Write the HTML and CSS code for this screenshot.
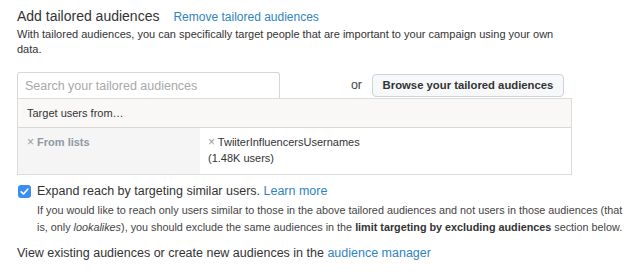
FILE: index.html
```html
<!DOCTYPE html>
<html>
<head>
<meta charset="utf-8">
<link rel="stylesheet" href="styles.css">
</head>
<body>
<div class="page">
  <div class="title-row">
    <h2 class="title">Add tailored audiences</h2>
    <a class="link remove" href="#">Remove tailored audiences</a>
  </div>
  <p class="desc">With tailored audiences, you can specifically target people that are important to your campaign using your own data.</p>

  <div class="search-row">
    <div class="search">Search your tailored audiences</div>
    <div class="browse-group">
      <span class="or">or</span>
      <button class="browse">Browse your tailored audiences</button>
    </div>
  </div>
  <div class="panel">
    <div class="panel-head">Target users from…</div>
    <div class="panel-body">
      <div class="col-left"><span class="x">×</span> <b>From lists</b></div>
      <div class="col-right"><span class="x">×</span> TwiiterInfluencersUsernames<br>(1.48K users)</div>
    </div>
  </div>

  <div class="expand">
    <span class="checkbox"><svg viewBox="0 0 13 13" width="13" height="13"><path d="M3.2 6.8 L5.5 9 L9.9 4" fill="none" stroke="#fff" stroke-width="1.6" stroke-linecap="round" stroke-linejoin="round"/></svg></span>
    <span class="expand-text">Expand reach by targeting similar users. <a class="link" href="#">Learn more</a></span>
  </div>
  <p class="note">If you would like to reach only users similar to those in the above tailored audiences and not users in those audiences (that is, only <i>lookalikes</i>), you should exclude the same audiences in the <b>limit targeting by excluding audiences</b> section below.</p>

  <p class="footer">View existing audiences or create new audiences in the <a class="link" href="#">audience manager</a></p>
</div>
</body>
</html>
```

FILE: styles.css
```css
html, body {
  margin: 0;
  padding: 0;
  background: #fff;
}
body {
  font-family: "Liberation Sans", Arial, sans-serif;
  color: #333;
}
.page {
  width: 610px;
  padding: 7px 0 0 17px;
}
.title-row {
  display: flex;
  align-items: baseline;
  gap: 14px;
}
.title {
  margin: 0;
  font-size: 14px;
  line-height: 18px;
  font-weight: normal;
  color: #333;
}
.link {
  color: #2f84bf;
  text-decoration: none;
}
.remove {
  font-size: 12px;
}
.desc {
  width: 555px;
  margin: 2px 0 0;
  font-size: 11px;
  line-height: 15px;
  color: #333;
}
.search-row {
  width: 555px;
  margin-top: 15px;
  display: flex;
  align-items: center;
  justify-content: space-between;
  height: 26px;
}
.search {
  box-sizing: border-box;
  width: 263px;
  height: 26px;
  border: 1px solid #d6d6d6;
  border-bottom: none;
  border-radius: 3px 3px 0 0;
  padding: 0 7px;
  font-size: 12.5px;
  line-height: 26px;
  color: #a8a8a8;
}
.browse-group {
  display: flex;
  align-items: center;
  padding-right: 8px;
}
.or {
  font-size: 12.5px;
  color: #444;
  margin-right: 10px;
}
.browse {
  box-sizing: border-box;
  height: 23px;
  width: 192px;
  border: 1px solid #ccd3d9;
  border-radius: 4px;
  background: #f6f8fa;
  font-family: "Liberation Sans", Arial, sans-serif;
  font-weight: bold;
  font-size: 11.3px;
  color: #333;
  padding: 0;
}
.panel {
  box-sizing: border-box;
  width: 555px;
  border: 1px solid #dcdcdc;
}
.panel-head {
  height: 29px;
  box-sizing: border-box;
  border-bottom: 1px solid #d8d8d8;
  background: #faf8f7;
  padding-left: 9px;
  font-size: 11px;
  line-height: 28px;
  color: #333;
}
.panel-body {
  display: flex;
  height: 46px;
}
.col-left {
  width: 182px;
  background: #f5f5f5;
  padding: 6px 0 0 9px;
  box-sizing: border-box;
  font-size: 11px;
  line-height: 16px;
  color: #8a98a4;
}
.col-left b {
  color: #8d9aa5;
}
.col-right {
  padding: 6px 0 0 8px;
  font-size: 11px;
  line-height: 16px;
  color: #333;
}
.x {
  color: #9a9a9a;
  font-size: 12px;
}
.expand {
  margin-top: 7px;
  display: flex;
  align-items: center;
  height: 18px;
}
.checkbox {
  width: 13px;
  height: 13px;
  margin-left: 1px;
  margin-right: 6px;
  border-radius: 3px;
  background: #3a8df5;
  display: flex;
}
.expand-text {
  font-size: 12.5px;
  line-height: 18px;
  color: #333;
}
.note {
  margin: 2px 0 0 20px;
  font-size: 10.8px;
  line-height: 17px;
  color: #444;
}
.note b {
  color: #333;
}
.footer {
  margin: 8px 0 0;
  font-size: 12.5px;
  line-height: 18px;
  color: #333;
}
```
